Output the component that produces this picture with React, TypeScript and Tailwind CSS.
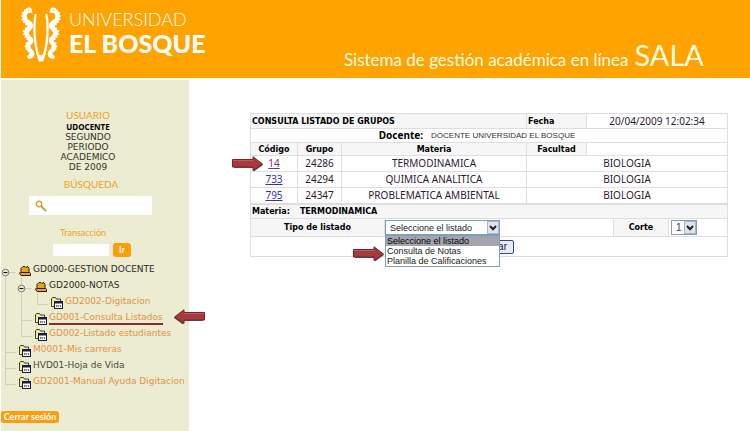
import React from "react";

const VERDANA = "font-['DejaVu_Sans',sans-serif]";
const NOTO = "font-['Noto_Sans',sans-serif]";
const GILL = "font-['Lato',sans-serif]";
const TAHOMA = "font-['Liberation_Sans',sans-serif]";

function Leaf() {
  return (
    <>
      <path
        fill="#fff"
        d="M95 37 L92 24 L84 20 L82 24 L76 22 L75 27 L69 27 L69 33 L62 36 L65 42 L60 48 L65 52 L61 59 L67 61 L66 68 L73 69 L73 75 L80 76 L77 82 L71 83 L73 89 L65 91 L69 98 L65 104 L72 106 L70 113 L77 114 L76 120 L83 121 L80 127 L73 129 L76 135 L70 140 L76 144 L73 150 L80 152 L80 158 L87 158 L84 165 L78 170 L82 178 L91 177 L98 172 L101 164 L98 154 L91 146 L88 138 L94 132 L98 124 L96 115 L88 107 L83 98 L89 91 L96 84 L97 73 L91 64 L80 56 L77 46 L82 38 Z"
      />
      <path fill="none" stroke="#fff" strokeWidth="7" d="M105 41 C97 80 101 138 116 180" />
      <circle cx="82" cy="29" r="2" fill="#ffa300" />
    </>
  );
}

function Crest() {
  return (
    <svg viewBox="60 18 122 168" className="h-14 w-10 shrink-0" aria-hidden="true">
      <Leaf />
      <g transform="translate(242 0) scale(-1 1)">
        <Leaf />
      </g>
      <path fill="#fff" d="M110 165 H132 L128 186 H114 Z" />
      <path fill="#ffa300" d="M116 150 L121 174 L126 150 Z" />
    </svg>
  );
}

function Pointer({ className }: { className: string }) {
  return (
    <svg viewBox="0 0 32 16" className={`absolute z-20 h-4 w-8 ${className}`} aria-hidden="true">
      <path d="M2 5.500 H22 V2 L31 9 L22 15.500 V12 H2 Z" fill="#3a1416" opacity=".75" />
      <path d="M0.500 3.500 H21 V0.800 L30.500 8 L21 14.500 V11 H0.500 Z" fill="#a83a3e" stroke="#70262a" strokeWidth="1" />
      <path d="M1 4.500 H21" stroke="#c25b5e" strokeWidth="1" />
    </svg>
  );
}

function HatIcon() {
  return (
    <svg viewBox="0 0 12 12" className="h-3 w-3 shrink-0" aria-hidden="true">
      <path d="M2 6.500 V3.500 L4 1.500 H6 L7 2.500 L8.500 1.500 L10 3.500 V6.500 L11.500 8.500 V10.500 H2 L0.500 8 Z" fill="#e9a21c" stroke="#2a1c00" strokeWidth="1" />
      <path d="M1.500 7.500 H10 M2 10.500 H12" stroke="#2a1c00" strokeWidth="1.200" />
    </svg>
  );
}

function FolderIcon() {
  return (
    <svg viewBox="0 0 12 12" className="h-3 w-3 shrink-0" aria-hidden="true">
      <path d="M0.500 9.500 V2 L1.500 0.500 H4.500 L5.500 2 H9.500 V9.500 Z" fill="#f7ef9a" stroke="#3c3c30" />
      <rect x="3.500" y="4.500" width="8" height="7" fill="#fff" stroke="#1b1b4a" />
      <path d="M3 5.500 H12" stroke="#1b1b4a" strokeWidth="2" />
      <path d="M5 9 H6.500 M7.200 9 H8.200 M9 9 H10.200" stroke="#444" strokeWidth="1.500" />
    </svg>
  );
}

type Guide = "line" | "tee" | "end" | "open" | "root";

function GuideCell({ kind, label }: { kind: Guide; label: string }) {
  const lines: Record<Guide, string> = {
    line: "M4.500 0 V16",
    tee: "M4.500 0 V16 M4.500 11.500 H15",
    end: "M4.500 0 V11.500 H15",
    open: "M4.500 0 V16 M4.500 11.500 H15",
    root: "M4.500 11 V16 M4.500 11.500 H15",
  };
  const toggle = kind === "open" || kind === "root";
  const drawing = (
    <svg viewBox="0 0 16 16" className="block h-4 w-4 overflow-visible" aria-hidden="true">
      <path d={lines[kind]} stroke="#cfd0bd" fill="none" />
      {toggle && (
        <>
          <circle cx="4.500" cy="11.500" r="3.300" fill="#f4f5e6" stroke="#777" />
          <path d="M2.500 11.500 H6.500" stroke="#111" strokeWidth="1.200" />
        </>
      )}
    </svg>
  );
  return toggle ? (
    <button type="button" aria-label={`Contraer ${label}`} className="block shrink-0">
      {drawing}
    </button>
  ) : (
    <span className="block shrink-0">{drawing}</span>
  );
}

const tree: { guides: Guide[]; text: string; tone: string; hat?: boolean; marked?: boolean }[] = [
  { guides: ["root"], text: "GD000-GESTION DOCENTE", tone: "text-[#2b2b20]", hat: true },
  { guides: ["line", "open"], text: "GD2000-NOTAS", tone: "text-[#2b2b20]", hat: true },
  { guides: ["line", "line", "end"], text: "GD2002-Digitacion", tone: "text-[#e8923c]" },
  { guides: ["line", "tee"], text: "GD001-Consulta Listados", tone: "text-[#e8923c]", marked: true },
  { guides: ["line", "end"], text: "GD002-Listado estudiantes", tone: "text-[#e8923c]" },
  { guides: ["tee"], text: "M0001-Mis carreras", tone: "text-[#e8923c]" },
  { guides: ["tee"], text: "HVD01-Hoja de Vida", tone: "text-[#4a4a34]" },
  { guides: ["end"], text: "GD2001-Manual Ayuda Digitacion", tone: "text-[#e8923c]" },
];

function Sidebar() {
  return (
    <aside className="flex w-[188px] shrink-0 flex-col bg-[#ebecd2]">
      <section className="flex flex-col items-center pt-7 pr-3.5 text-center">
        <h2 className={`${GILL} text-[10px] leading-[14px] text-[#efa224]`}>USUARIO</h2>
        <p className={`${NOTO} text-[8px] font-bold leading-[10px] text-black`}>UDOCENTE</p>
        <p className={`${VERDANA} w-16 text-[9px] leading-[10px] text-[#33332a]`}>
          SEGUNDO PERIODO ACADEMICO DE&nbsp;2009
        </p>
      </section>
      <form className="flex flex-col" onSubmit={(e) => e.preventDefault()}>
        <label htmlFor="busqueda" className={`${GILL} mt-1 pr-2 text-center text-[10px] leading-4 text-[#efa224]`}>
          BÚSQUEDA
        </label>
        <div className="mt-1 ml-7 flex h-[19px] w-[123px] items-center bg-white pl-1.5">
          <svg viewBox="0 0 12 12" className="h-3 w-3 shrink-0" aria-hidden="true">
            <circle cx="4" cy="4" r="2.800" fill="#fbf3cf" stroke="#c9a23a" strokeWidth="1.300" />
            <path d="M6.200 6.200 L10.500 10.500" stroke="#c9a23a" strokeWidth="2" strokeLinecap="round" />
          </svg>
          <input id="busqueda" className="h-4 w-full min-w-0 bg-transparent px-1 text-[10px] outline-none" />
        </div>
      </form>
      <form className="mt-2.5 flex flex-col" onSubmit={(e) => e.preventDefault()}>
        <label htmlFor="transaccion" className={`${GILL} pr-6 text-center text-[9px] leading-4 text-[#efa224]`}>
          Transacción
        </label>
        <div className="mt-0.5 flex items-center gap-1 pl-[52px]">
          <input id="transaccion" className="h-3 w-14 bg-white px-1 text-[9px] outline-none" />
          <button type="submit" className={`${GILL} h-3.5 w-[18px] rounded-[3px] bg-[#ff9c0a] text-[9px] font-bold leading-[14px] text-white`}>
            Ir
          </button>
        </div>
      </form>
      <nav className="mt-1" aria-label="Menú">
        <ul>
          {tree.map((n) => (
            <li key={n.text} className="flex h-4">
              {n.guides.map((g, i) => (
                <GuideCell key={i} kind={g} label={n.text} />
              ))}
              <span className="mt-1 ml-0.5">{n.hat ? <HatIcon /> : <FolderIcon />}</span>
              <a href="#" className={`${VERDANA} ml-0.5 whitespace-nowrap text-[9px] leading-4 ${n.tone} ${n.marked ? "relative" : ""}`}>
                {n.text}
                {n.marked && (
                  <>
                    <span className="absolute inset-x-0 bottom-0 h-0.5 bg-[#8e2a30]" />
                    <Pointer className="top-0 left-[124px] -scale-x-100" />
                  </>
                )}
              </a>
            </li>
          ))}
        </ul>
      </nav>
      <button type="button" className={`${GILL} mt-[22px] h-3 w-[58px] rounded-[3px] bg-[#ff9c0a] text-[9px] font-bold leading-3 text-white`}>
        Cerrar sesión
      </button>
    </aside>
  );
}

function Chevron() {
  return (
    <span className="pointer-events-none absolute inset-y-px right-px flex w-3 items-center justify-center border border-[#aab4cc] bg-[#dfe3ee]">
      <svg viewBox="0 0 8 6" className="h-1.5 w-2" aria-hidden="true">
        <path d="M1 1 L4 4.200 L7 1" fill="none" stroke="#222" strokeWidth="2" />
      </svg>
    </span>
  );
}

const groups = [
  { code: "14", group: "24286", subject: "TERMODINAMICA", visited: true },
  { code: "733", group: "24294", subject: "QUIMICA ANALITICA" },
  { code: "795", group: "24347", subject: "PROBLEMATICA AMBIENTAL" },
];

const CELL = "border border-[#dedede] p-0";
const HEAD = "border border-[#dedede] bg-[#f6f6f6] p-0 font-['DejaVu_Sans',sans-serif] text-[8px] font-bold";

function Groups() {
  return (
    <table className={`${NOTO} w-full table-fixed border-collapse text-center text-[10px] leading-[11px] text-[#2c1a33]`}>
      <colgroup>
        <col className="w-[47px]" />
        <col className="w-11" />
        <col />
        <col className="w-[60px]" />
        <col className="w-[141px]" />
      </colgroup>
      <thead className="text-black">
        <tr className="h-[15px]">
          <th colSpan={3} className={`${HEAD} pl-px text-left`}>CONSULTA LISTADO DE GRUPOS</th>
          <th className={`${HEAD} pl-px text-left`}>Fecha</th>
          <td className={`${CELL} text-[#2c1a33]`}>20/04/2009 12:02:34</td>
        </tr>
        <tr className="h-3.5">
          <td colSpan={5} className={CELL}>
            <div className="flex h-3 items-center justify-center gap-2 pr-6">
              <strong className="font-bold">Docente:</strong>
              <span className={`${TAHOMA} text-[8px] text-[#333]`}>DOCENTE UNIVERSIDAD EL BOSQUE</span>
            </div>
          </td>
        </tr>
        <tr className="h-[13px]">
          <th className={HEAD}>Código</th>
          <th className={HEAD}>Grupo</th>
          <th className={HEAD}>Materia</th>
          <th className={HEAD}>Facultad</th>
          <td className={CELL} />
        </tr>
      </thead>
      <tbody>
        {groups.map((g) => (
          <tr key={g.code} className="h-4">
            <td className={`${CELL} relative`}>
              {g.visited && <Pointer className="top-0 -left-[19px]" />}
              <a href="#" className={`underline ${g.visited ? "text-[#7a2a90]" : "text-[#2f2fd0]"}`}>{g.code}</a>
            </td>
            <td className={CELL}>{g.group}</td>
            <td className={CELL}>{g.subject}</td>
            <td colSpan={2} className={CELL}>BIOLOGIA</td>
          </tr>
        ))}
      </tbody>
    </table>
  );
}

function Filters() {
  const edge = "border-[#dedede]";
  const label = `${VERDANA} flex items-center justify-center border-r ${edge} bg-[#f6f6f6] text-[8px] font-bold text-black`;
  return (
    <form className={`border ${edge}`} onSubmit={(e) => e.preventDefault()}>
      <h2 className={`${VERDANA} flex h-3.5 items-center gap-2.5 border-b ${edge} bg-[#f6f6f6] pl-px text-[8px] font-bold leading-3 text-black`}>
        <span>Materia:</span>
        <span>TERMODINAMICA</span>
      </h2>
      <div className={`flex h-[18px] border-b ${edge}`}>
        <label htmlFor="tipo" className={`${label} w-[134px]`}>Tipo de listado</label>
        <div className={`flex flex-1 items-center border-r ${edge}`}>
          <div className="relative h-[15px] w-[115px]">
            <select id="tipo" className={`${TAHOMA} block h-full w-full appearance-none border border-[#7f9db9] bg-white pl-1 text-[9px] leading-3 text-[#222]`}>
              <option>Seleccione el listado</option>
              <option>Consulta de Notas</option>
              <option>Planilla de Calificaciones</option>
            </select>
            <Chevron />
            <ul role="listbox" aria-label="Tipo de listado" className={`${TAHOMA} absolute inset-x-0 top-full z-10 border border-[#7f9db9] bg-white text-[9px] leading-[10px] text-[#222]`}>
              <li role="option" aria-selected="true" className="bg-[#a5a5b1] pl-px text-black">Seleccione el listado</li>
              <li role="option" aria-selected="false" className="pl-px">Consulta de Notas</li>
              <li role="option" aria-selected="false" className="pl-px">Planilla de Calificaciones</li>
            </ul>
            <Pointer className="top-[26px] -left-8" />
          </div>
        </div>
        <label htmlFor="corte" className={`${label} w-[55px]`}>Corte</label>
        <div className="flex w-[58px] items-center pl-0.5">
          <div className="relative h-[15px] w-[26px]">
            <select id="corte" className={`${TAHOMA} block h-full w-full appearance-none border border-[#7f9db9] bg-white pl-1 text-[10px] leading-3 text-[#4a2a4a]`}>
              <option>1</option>
            </select>
            <Chevron />
          </div>
        </div>
      </div>
      <div className="flex h-[19px] items-center justify-center">
        <button type="submit" className={`${TAHOMA} h-3.5 w-[50px] rounded-[2px] border border-[#2b4b8c] bg-[#e6ebf6] pr-1.5 text-right text-[10px] leading-3 text-[#222]`}>
          Enviar
        </button>
      </div>
    </form>
  );
}

export default function App() {
  return (
    <div className="flex min-h-screen flex-col bg-white pl-px">
      <header className={`${GILL} flex h-[78px] justify-between bg-[#ffa300] pr-[46px] pl-5 text-white`}>
        <div className="flex gap-2 pt-1.5">
          <Crest />
          <h1 className="pt-[3px]">
            <span className="block text-[18px] leading-5 font-light">UNIVERSIDAD</span>
            <span className="block text-[25px] leading-7 font-black">EL BOSQUE</span>
          </h1>
        </div>
        <p className="flex items-baseline gap-1.5 self-end pb-0.5 text-[17px] leading-8 text-[#fffbe0]">
          <span>Sistema de gestión académica en línea</span>
          <span className="text-[29px]">SALA</span>
        </p>
      </header>
      <div className="flex flex-1 pt-0.5">
        <Sidebar />
        <main className="min-w-0 flex-1 pt-[33px] pr-[22px] pl-[61px]">
          <Groups />
          <Filters />
        </main>
      </div>
    </div>
  );
}
